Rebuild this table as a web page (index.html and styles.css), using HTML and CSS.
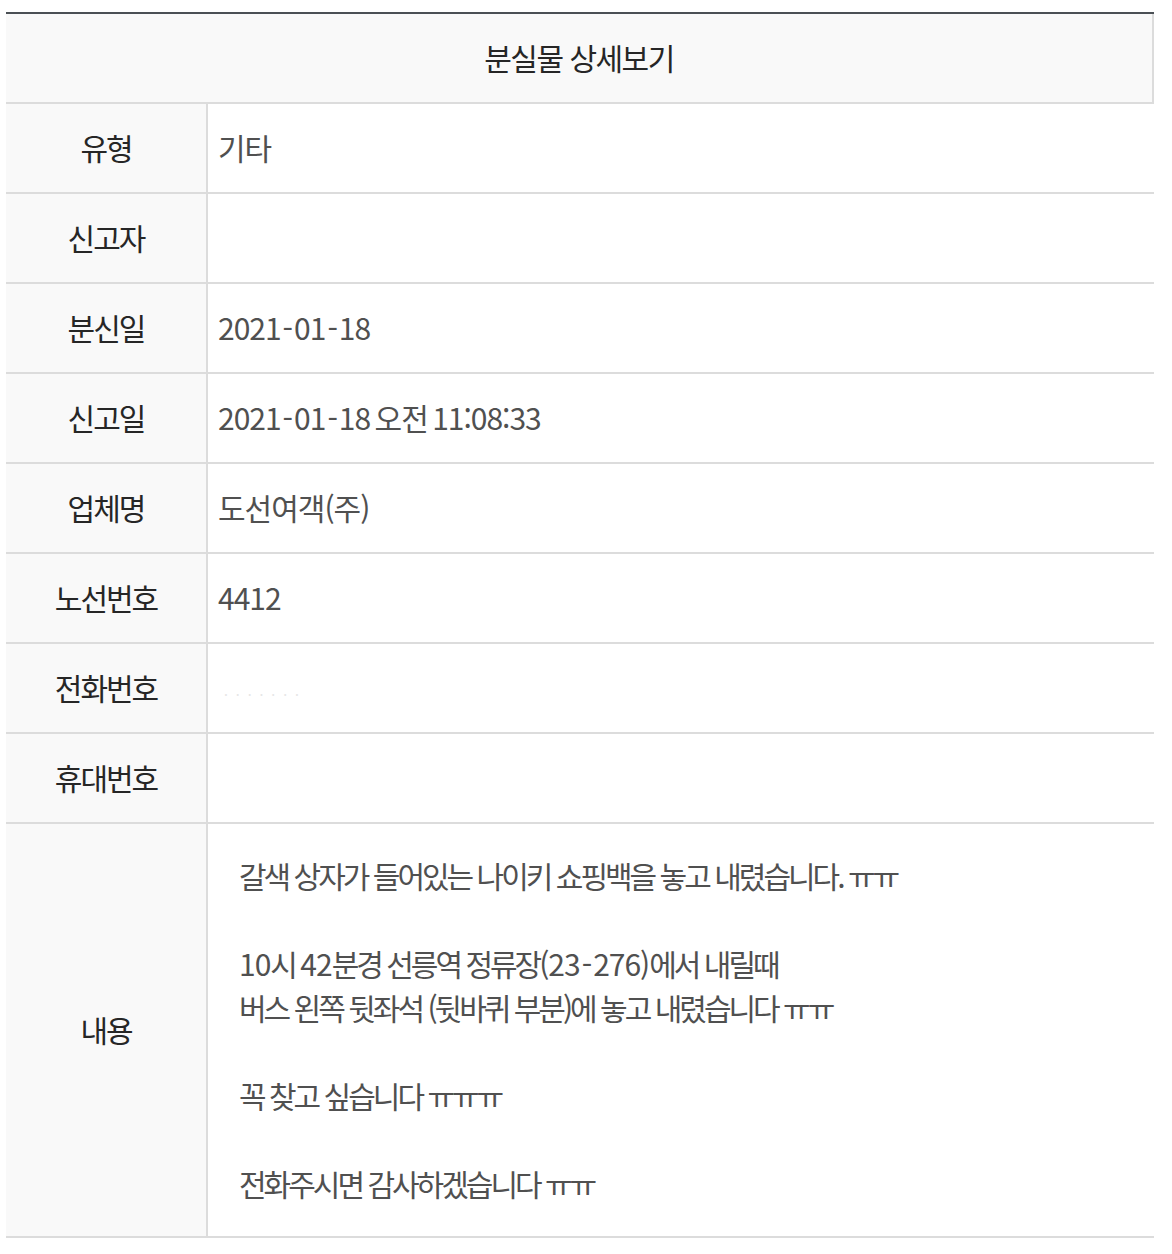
FILE: index.html
```html
<!DOCTYPE html>
<html lang="ko">
<head>
    <meta charset="UTF-8">
    <meta name="viewport" content="width=device-width, initial-scale=1.0">
    <title>분실물 상세보기</title>
    <link rel="stylesheet" href="styles.css">
</head>
<body>
    <table class="detail">
        <colgroup>
            <col class="col-label">
            <col>
        </colgroup>
        <thead>
            <tr>
                <th colspan="2" class="title">분실물 상세보기</th>
            </tr>
        </thead>
        <tbody>
            <tr>
                <th>유형</th>
                <td>기타</td>
            </tr>
            <tr>
                <th>신고자</th>
                <td></td>
            </tr>
            <tr>
                <th>분신일</th>
                <td>2021<span class="dash">-</span>01<span class="dash">-</span>18</td>
            </tr>
            <tr>
                <th>신고일</th>
                <td>2021<span class="dash">-</span>01<span class="dash">-</span>18 오전 11:08:33</td>
            </tr>
            <tr>
                <th>업체명</th>
                <td>도선여객(주)</td>
            </tr>
            <tr>
                <th>노선번호</th>
                <td>4412</td>
            </tr>
            <tr>
                <th>전화번호</th>
                <td><span class="masked">· · · · · · ·</span></td>
            </tr>
            <tr>
                <th>휴대번호</th>
                <td></td>
            </tr>
            <tr class="content-row">
                <th>내용</th>
                <td>
                    <div class="content">갈색 상자가 들어있는 나이키 쇼핑백을 놓고 내렸습니다. ㅠㅠ<br><br><span class="num">10</span>시 <span class="num">42</span>분경 선릉역 정류장<span class="num">(23<span class="dash">-</span>276)</span>에서 내릴때<br>버스 왼쪽 뒷좌석 (뒷바퀴 부분)에 놓고 내렸습니다 ㅠㅠ<br><br>꼭 찾고 싶습니다 ㅠㅠㅠ<br><br>전화주시면 감사하겠습니다 ㅠㅠ</div>
                </td>
            </tr>
        </tbody>
    </table>
</body>
</html>
```

FILE: styles.css
```css
:root {
    --line-color: #dcdcdc;
    --top-line: #4b5055;
    --label-bg: #f9f9f9;
    --label-text: #262626;
    --value-text: #505050;
}

body {
    margin: 12px 0 0 6px;
    font-family: "Noto Sans CJK KR", "Noto Sans", sans-serif;
    background-color: #fff;
}

.detail {
    width: 1148px;
    table-layout: fixed;
    border-collapse: separate;
    border-spacing: 0;
    border-top: 2px solid var(--top-line);
}

.col-label {
    width: 202px;
}

.detail th,
.detail td {
    height: 85px;
    padding: 0 10px 3px;
    border-bottom: 2px solid var(--line-color);
    font-size: 30px;
    vertical-align: middle;
}

.detail th {
    background-color: var(--label-bg);
    border-right: 2px solid var(--line-color);
    color: var(--label-text);
    font-weight: 400;
    letter-spacing: -2px;
    text-align: center;
}

.detail td {
    color: var(--value-text);
    font-weight: 400;
    letter-spacing: -1px;
    word-spacing: -3px;
    text-align: left;
}

.detail .title {
    letter-spacing: -1.5px;
    word-spacing: 0;
}

.dash {
    margin: 0 2px;
}

.masked {
    color: #e6e6e6;
    font-size: 14px;
    letter-spacing: 2px;
    word-spacing: 0;
    padding-left: 6px;
}

.content-row td {
    height: auto;
    padding: 29px 10px 31px 31px;
    word-spacing: 0;
}

.content {
    line-height: 44px;
    letter-spacing: -3px;
}

.content .num {
    letter-spacing: -1px;
}
```
